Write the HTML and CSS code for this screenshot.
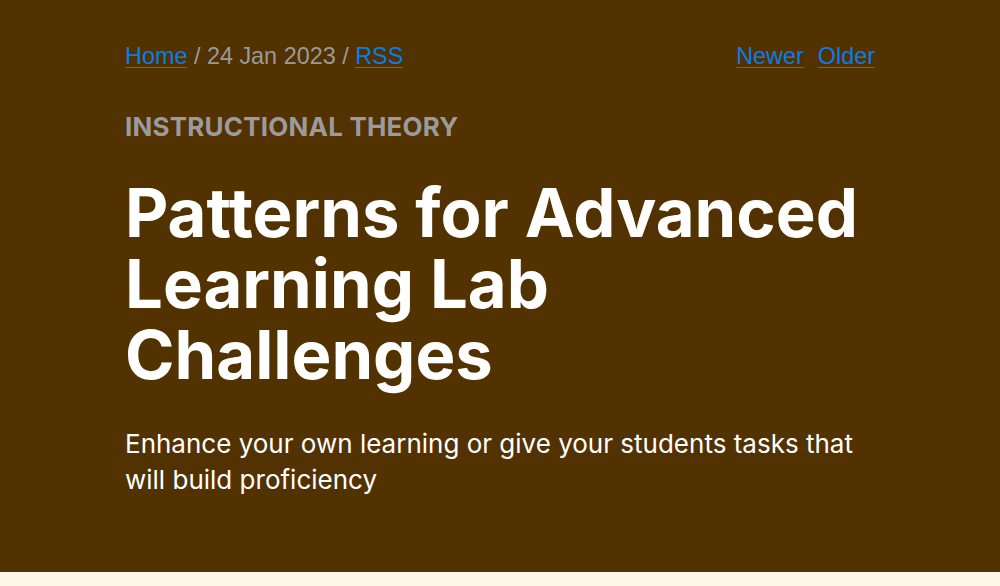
FILE: index.html
```html
<!DOCTYPE html>
<html lang="en">
<head>
<meta charset="utf-8">
<link rel="stylesheet" href="styles.css">
</head>
<body>
<header class="hero">
  <div class="wrap">
    <nav class="topnav">
      <div class="crumbs"><a href="#">Home</a> / 24 Jan 2023 / <a href="#">RSS</a></div>
      <div class="pager"><a href="#">Newer</a><a href="#">Older</a></div>
    </nav>
    <div class="category">INSTRUCTIONAL THEORY</div>
    <h1 class="title">Patterns for Advanced Learning Lab Challenges</h1>
    <p class="lede">Enhance your own learning or give your students tasks that will build proficiency</p>
  </div>
</header>
<main class="body"></main>
</body>
</html>
```
FILE: styles.css
```css
html, body { margin: 0; padding: 0; }
body { background: #fff6ea; font-family: Inter, "Noto Sans", sans-serif; }
.hero { background: #523200; height: 572px; box-sizing: border-box; padding-top: 41px; }
.wrap { width: 750px; margin: 0 auto; }
.topnav { display: flex; justify-content: space-between; font-family: "Liberation Sans", Arial, sans-serif; font-size: 23.4px; color: #9a9a9a; line-height: 30px; }
.topnav a { color: #0a7ce8; text-decoration: underline; text-underline-offset: 3px; text-decoration-thickness: 1px; }
.pager { display: flex; gap: 14px; }
.category { margin-top: 40px; font-weight: 700; font-size: 26px; color: #9b9b9b; line-height: 32px; letter-spacing: 0.2px; }
.title { margin: 34px 0 0; color: #fff; font-weight: 700; font-size: 67px; line-height: 71px; letter-spacing: 0; }
.lede { margin: 36px 0 0; color: #fff; font-size: 26px; line-height: 36px; }
```
